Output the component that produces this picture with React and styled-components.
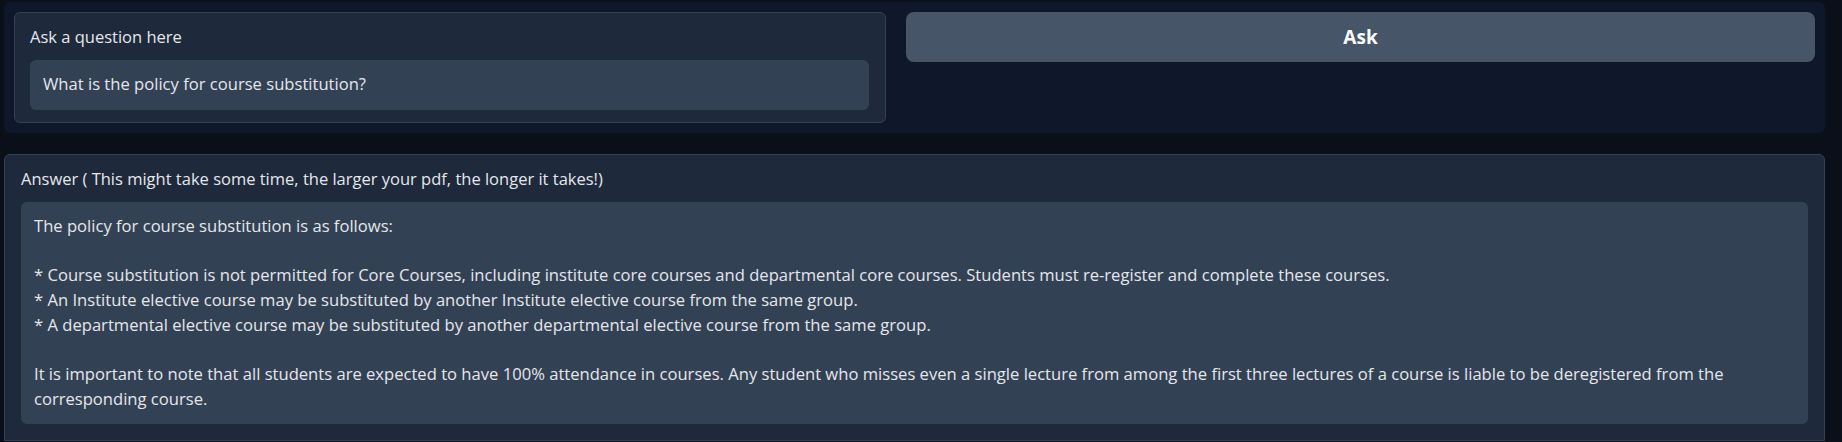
import React from 'react'
import styled, { createGlobalStyle } from 'styled-components'

const GlobalStyle = createGlobalStyle`
  html, body {
    margin: 0;
    padding: 0;
    background: #0b0f19;
  }
  body {
    font-family: "Open Sans", "Noto Sans", sans-serif;
    color: #e5e7eb;
  }
`

const Page = styled.div`
  width: 1821px;
  padding: 2px 0 0 4px;
  display: flex;
  flex-direction: column;
  gap: 21px;
`

const Row = styled.div`
  display: grid;
  grid-template-columns: 872fr 909fr;
  gap: 20px;
  align-items: start;
  padding: 10px;
  background: #0f172a;
  border-radius: 6px;
`

const Block = styled.div`
  background: #1e293b;
  border: 1px solid #334155;
  border-radius: ${({ square }) => (square ? '6px 6px 0 0' : '6px')};
  padding: ${({ square }) => (square ? '13px 16px 16px' : '13px 16px 12px 15px')};
  display: flex;
  flex-direction: column;
  gap: 12px;
`

const Label = styled.div`
  font-size: 16.5px;
  line-height: 22px;
  color: #e5e7eb;
`

const Field = styled.div`
  background: #334155;
  border-radius: 6px;
  padding: 12px 13px;
  font-size: 16.6px;
  line-height: 24.7px;
  color: #e5e7eb;
  white-space: pre-wrap;
  min-height: ${({ single }) => (single ? '50px' : 'auto')};
  box-sizing: border-box;
`

const AskButton = styled.button`
  height: 50px;
  border: none;
  border-radius: 8px;
  background: #475569;
  color: #ffffff;
  font-family: "Open Sans", "Noto Sans", sans-serif;
  font-weight: 700;
  font-size: 19px;
  cursor: pointer;
`

const answer = `The policy for course substitution is as follows:

* Course substitution is not permitted for Core Courses, including institute core courses and departmental core courses. Students must re-register and complete these courses.
* An Institute elective course may be substituted by another Institute elective course from the same group.
* A departmental elective course may be substituted by another departmental elective course from the same group.

It is important to note that all students are expected to have 100% attendance in courses. Any student who misses even a single lecture from among the first three lectures of a course is liable to be deregistered from the corresponding course.`

const App = () => (
  <>
    <GlobalStyle />
    <Page>
      <Row>
        <Block>
          <Label>Ask a question here</Label>
          <Field single>What is the policy for course substitution?</Field>
        </Block>
        <AskButton>Ask</AskButton>
      </Row>
      <Block square>
        <Label>Answer ( This might take some time, the larger your pdf, the longer it takes!)</Label>
        <Field>{answer}</Field>
      </Block>
    </Page>
  </>
)

export default App
